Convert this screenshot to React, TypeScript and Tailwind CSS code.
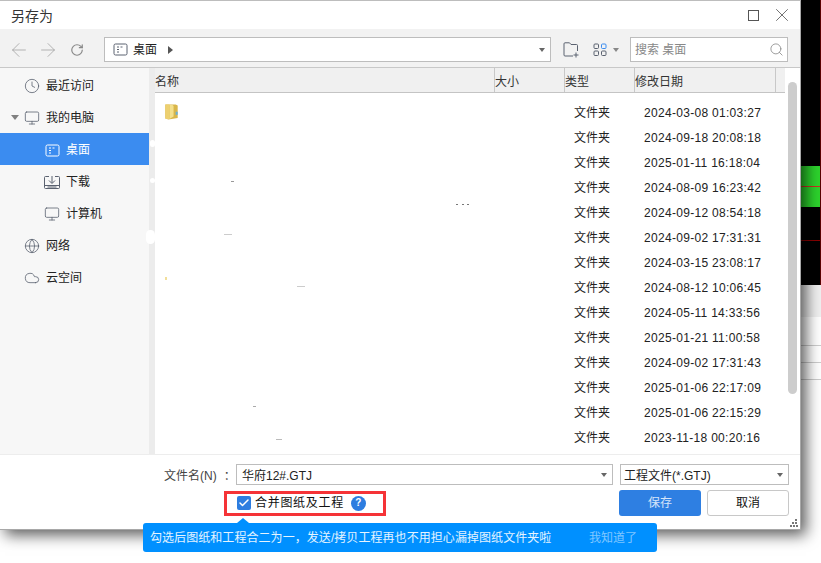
import React from "react";
import { ArrowLeft, ArrowRight, RotateCw, Clock, Monitor, Globe, Cloud, Search, X, Check } from "lucide-react";

const rows = [
  "2024-03-08 01:03:27",
  "2024-09-18 20:08:18",
  "2025-01-11 16:18:04",
  "2024-08-09 16:23:42",
  "2024-09-12 08:54:18",
  "2024-09-02 17:31:31",
  "2024-03-15 23:08:17",
  "2024-08-12 10:06:45",
  "2024-05-11 14:33:56",
  "2025-01-21 11:00:58",
  "2024-09-02 17:31:43",
  "2025-01-06 22:17:09",
  "2025-01-06 22:15:29",
  "2023-11-18 00:20:16",
];

const font = { fontFamily: '"Liberation Sans","Noto Sans CJK SC",sans-serif' };

function DesktopIcon({ color = "#5b6270" }: { color?: string }) {
  return (
    <svg width="15" height="13" viewBox="0 0 15 13" fill="none">
      <rect x="1" y="1" width="13" height="11" rx="1.5" stroke={color} />
      <path d="M4 4h2M7.500 4h2M4 6.500h2M4 9h2" stroke={color} />
    </svg>
  );
}

function DownloadTray() {
  return (
    <svg width="16" height="15" viewBox="0 0 16 15" fill="none" stroke="#5b6270">
      <path d="M5 1.500H1.500a1 1 0 0 0-1 1v10a1 1 0 0 0 1 1h13a1 1 0 0 0 1-1v-10a1 1 0 0 0-1-1H11" />
      <path d="M8 1v7M5 5.500 8 8.500l3-3M.5 10.500h15M3.500 12h9" />
    </svg>
  );
}

function NavRow({ icon, label, indent, active, caret }: { icon: React.ReactNode; label: string; indent?: boolean; active?: boolean; caret?: boolean }) {
  return (
    <div className={`h-8 pt-[2px] flex items-center text-xs ${indent ? "pl-[44px]" : "pl-[24px]"} ${active ? "bg-[#3b8cf0] text-white" : "text-[#222]"} relative`}>
      {caret && <span className="absolute left-[11px] top-[14px] w-0 h-0 border-x-[4px] border-x-transparent border-t-[5px] border-t-[#808080]" />}
      <span className="w-[16px] flex justify-center mr-[6px]">{icon}</span>
      <span>{label}</span>
    </div>
  );
}

function Caret({ color = "#666" }: { color?: string }) {
  return <span className="block w-0 h-0 border-x-[3.5px] border-x-transparent border-t-[4px]" style={{ borderTopColor: color }} />;
}

export default function App() {
  const ic = "#5b6270";
  return (
    <div className="relative w-[821px] h-[563px] overflow-hidden bg-white flex items-start" style={font}>
      {/* Dialog */}
      <div className="relative z-10 w-[801px] h-[530px] shrink-0 flex flex-col bg-white border-t border-t-[#bdbdbd] border-r border-b border-[#a8a8a8] shadow-[5px_5px_14px_rgba(0,0,0,0.65)]">
        {/* Title */}
        <div className="h-[28px] shrink-0 flex items-center pl-[11px] pr-[7px] bg-white">
          <span className="text-[14px] pt-[2px] text-[#333] flex-1">另存为</span>
          <span className="w-[11px] h-[11px] border border-[#555] mr-[12px]" />
          <X size={22} strokeWidth={1} color="#666" />
        </div>
        {/* Toolbar */}
        <div className="h-[39px] shrink-0 flex items-center pt-[3px] bg-[#f2f2f2] border-b border-[#c8c8c8]">
          <div className="w-[104px] flex items-center pl-[8px] gap-[7px]">
            <ArrowLeft size={22} strokeWidth={0.8} color="#999" />
            <ArrowRight size={22} strokeWidth={0.8} color="#999" />
            <span className="ml-[4px]"><RotateCw size={14} strokeWidth={2} color="#888" /></span>
          </div>
          <div className="w-[447px] h-[25px] bg-white border border-[#bdbdbd] flex items-center pl-[8px] pr-[5px] text-xs text-[#222]">
            <DesktopIcon />
            <span className="ml-[5px]">桌面</span>
            <span className="ml-[11px] w-0 h-0 border-y-[4px] border-y-transparent border-l-[5px] border-l-[#555]" />
            <span className="flex-1" />
            <Caret />
          </div>
          <svg className="ml-[12px]" width="18" height="16" viewBox="0 0 18 16" fill="none" stroke={ic}>
            <path d="M14.500 9V3.500a1 1 0 0 0-1-1H8L6.500.8H2a1 1 0 0 0-1 1V13a1 1 0 0 0 1 1h8" />
            <path d="M13 10.500v5M10.500 13h5" />
          </svg>
          <svg className="ml-[12px]" width="15" height="14" viewBox="0 0 15 14" fill="none">
            <rect x="1" y="1" width="4.500" height="4.500" rx="1" stroke={ic} />
            <rect x="8.500" y="1" width="4.500" height="4.500" rx="1" stroke="#3b8cf0" />
            <rect x="1" y="8" width="4.500" height="4.500" rx="1" stroke={ic} />
            <rect x="8.500" y="8" width="4.500" height="4.500" rx="1" stroke={ic} />
          </svg>
          <span className="ml-[5px] mr-[11px]"><Caret color="#888" /></span>
          <div className="w-[158px] h-[25px] bg-white border border-[#bdbdbd] flex items-center pl-[4px] pr-[3px] text-xs text-[#888]">
            <span className="flex-1">搜索 桌面</span>
            <Search size={15} strokeWidth={1.3} color="#888" />
          </div>
        </div>
        {/* Body */}
        <div className="flex-1 min-h-0 flex relative">
          <div className="w-[149px] shrink-0 bg-[#f7f7f7] pt-[1px]">
            <NavRow icon={<Clock size={16} strokeWidth={1.2} color={ic} />} label="最近访问" />
            <NavRow caret icon={<Monitor size={16} strokeWidth={1.2} color={ic} />} label="我的电脑" />
            <NavRow active indent icon={<DesktopIcon color="#fff" />} label="桌面" />
            <NavRow indent icon={<DownloadTray />} label="下载" />
            <NavRow indent icon={<Monitor size={16} strokeWidth={1.2} color={ic} />} label="计算机" />
            <NavRow icon={<Globe size={16} strokeWidth={1.2} color={ic} />} label="网络" />
            <NavRow icon={<Cloud size={16} strokeWidth={1.2} color={ic} />} label="云空间" />
          </div>
          <div className="w-[6px] shrink-0 bg-[#ececec] relative">
            <span className="absolute left-px top-[72px] w-[5px] h-[7px] rounded-full bg-white" />
            <span className="absolute left-px top-[110px] w-[5px] h-[5px] rounded-full bg-white" />
            <span className="absolute left-[-3px] top-[162px] w-[9px] h-[14px] rounded-full bg-white" />
          </div>
          <div className="flex-1 min-w-0 flex">
            <div className="w-[633px] shrink-0 flex flex-col">
              <div className="h-[25px] w-[630px] shrink-0 bg-[#f0f0f0] border-b border-[#c4c4c4] flex items-center text-xs text-[#333]">
                <span className="w-[340px] pt-[4px] border-r border-[#c8c8c8] h-full flex items-center">名称</span>
                <span className="w-[70px] pt-[4px] border-r border-[#c8c8c8] h-full flex items-center">大小</span>
                <span className="w-[70px] pt-[4px] border-r border-[#c8c8c8] h-full flex items-center">类型</span>
                <span className="w-[141px] pt-[4px] border-r border-[#c8c8c8] h-full flex items-center">修改日期</span>
              </div>
              <div className="flex-1 pt-[7px] text-xs text-[#222] relative">
                {rows.map((d, i) => (
                  <div key={d + i} className="h-[25px] flex items-center">
                    <span className="w-[419px] pl-[10px] pb-[2px] flex">
                      {i === 0 && (
                        <svg width="13" height="16" viewBox="1 1.500 12 15.500">
                          <path d="M1 2h10l2 1v12l-9 1.500-3-1z" fill="#d9b64a" />
                          <path d="M5 2.500h3l1 1v10l-4 2.500z" fill="#f4e08c" />
                          <path d="M1 2h4v14H2a1 1 0 0 1-1-1z" fill="#edd070" />
                          <path d="M11 9h2v3h-2z" fill="#6ab0d8" />
                        </svg>
                      )}
                    </span>
                    <span className="w-[70px]">文件夹</span>
                    <span className="tracking-[0.3px]">{d}</span>
                  </div>
                ))}
                <span className="absolute left-[76px] top-[88px] w-[3px] h-px bg-[#999]" />
                <span className="absolute left-[301px] top-[111px] w-[2px] h-px bg-[#777]" />
                <span className="absolute left-[307px] top-[111px] w-[2px] h-px bg-[#777]" />
                <span className="absolute left-[312px] top-[111px] w-[2px] h-px bg-[#777]" />
                <span className="absolute left-[69px] top-[141px] w-[8px] h-px bg-[#ccc]" />
                <span className="absolute left-[142px] top-[193px] w-[8px] h-px bg-[#ccc]" />
                <span className="absolute left-[10px] top-[184px] w-[2px] h-[3px] bg-[#f2df9a]" />
                <span className="absolute left-[98px] top-[313px] w-[3px] h-px bg-[#aaa]" />
                <span className="absolute left-[121px] top-[346px] w-[6px] h-px bg-[#bbb]" />
              </div>
            </div>
            <div className="flex-1 bg-white pt-[14px]">
              <div className="w-[9px] h-[312px] rounded-full bg-[#cdcdcd]" />
            </div>
          </div>
        </div>
        {/* Footer */}
        <div className="h-[75px] shrink-0 bg-white border-t border-[#ededed] relative">
          <div className="flex items-center h-[21px] mt-[9px] pl-[164px] text-xs text-[#444]">
            <span className="w-[72px] pt-[2px]">文件名(N)<span className="ml-[7px]">：</span></span>
            <div className="w-[377px] h-[21px] bg-white border border-[#bdbdbd] flex items-center pl-[5px] pr-[5px] text-[#222]">
              <span className="flex-1 pt-[2px]">华府12#.GTJ</span>
              <Caret />
            </div>
            <div className="ml-[7px] w-[169px] h-[21px] bg-white border border-[#bdbdbd] flex items-center pl-[3px] pr-[5px] text-[#222]">
              <span className="flex-1 pt-[2px]">工程文件(*.GTJ)</span>
              <Caret />
            </div>
          </div>
          <div className="flex items-center mt-[5px] pl-[224px] pr-[11px]">
            <div className="w-[162px] h-[25px] border-[3px] border-[#f53337] flex items-center pl-[10px] text-xs text-[#111]">
              <span className="w-[14px] h-[14px] rounded-[2px] bg-[#2d7de0] flex items-center justify-center">
                <Check size={12} strokeWidth={3} color="#fff" />
              </span>
              <span className="ml-[4px] tracking-[0.7px] whitespace-nowrap">合并图纸及工程</span>
              <span className="ml-[7px] w-[15px] h-[15px] rounded-full bg-[#2d7de0] text-white text-[10px] font-bold flex items-center justify-center">?</span>
            </div>
            <span className="flex-1" />
            <button className="w-[82px] h-[26px] rounded-[3px] bg-[#2e7fe2] text-white/80 text-xs">保存</button>
            <button className="ml-[6px] w-[82px] h-[26px] rounded-[3px] bg-white border border-[#c8c8c8] text-[#111] text-xs">取消</button>
          </div>
          <svg className="absolute right-[2px] bottom-[2px]" width="8" height="8" viewBox="0 0 8 8" fill="#777">
            <path d="M5 0h2v2H5zM2 3h2v2H2zM5 3h2v2H5zM0 6h2v2H0zM3 6h2v2H3zM6 6h2v2H6z" />
          </svg>
        </div>
      </div>

      {/* Right strip: application behind the dialog */}
      <div className="flex-1 h-full flex flex-col">
        <div className="h-[285px] shrink-0 bg-black border-r border-[#5a0000] flex flex-col">
          <div className="h-[166px] shrink-0" />
          <div className="h-[20px] shrink-0 bg-[#2dd42d]" />
          <div className="h-px shrink-0 bg-[#d03020]" />
          <div className="h-[20px] shrink-0 bg-[#2dd42d]" />
          <div className="h-[33px] shrink-0" />
          <div className="h-px shrink-0 bg-[#8a0000]" />
        </div>
        <div className="h-[32px] shrink-0 bg-[#f0f0f0]" />
        <div className="h-[29px] shrink-0 bg-white border-b border-[#ccc]" />
        <div className="h-[17px] shrink-0 bg-white border-b border-[#ccc]" />
        <div className="h-[17px] shrink-0 bg-white border-b border-[#ccc]" />
      </div>

      {/* Tooltip */}
      <div className="absolute z-20 left-[143px] top-[523px] w-[514px] h-[29px] rounded-[3px] bg-[#0090ff] flex items-center pl-[7px] text-xs text-white/90">
        <span className="absolute left-[94px] top-[-5px] w-0 h-0 border-x-[6px] border-x-transparent border-b-[5px] border-b-[#0090ff]" />
        <span className="w-[439px] tracking-[0.06px]">勾选后图纸和工程合二为一，发送/拷贝工程再也不用担心漏掉图纸文件夹啦</span>
        <span className="text-white/50">我知道了</span>
      </div>
    </div>
  );
}
